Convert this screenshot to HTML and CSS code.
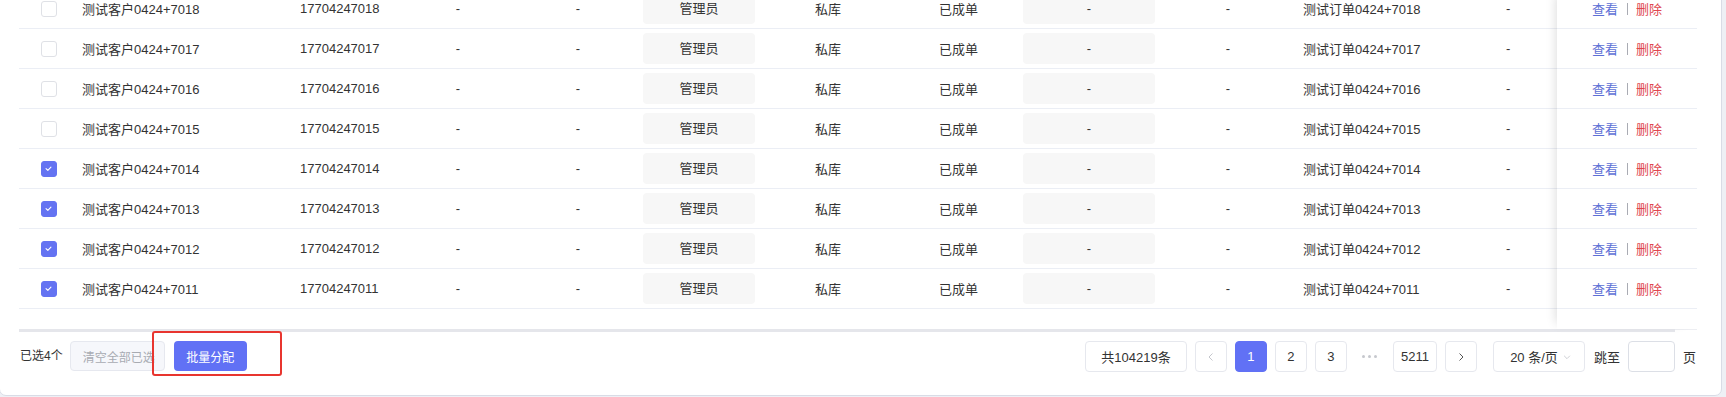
FILE: index.html
```html
<!DOCTYPE html>
<html lang="zh-CN">
<head>
<meta charset="utf-8">
<title>客户列表</title>
<link rel="stylesheet" href="styles.css">
</head>
<body>
<div class="card">
  <div class="table">
    <div class="tbody">
      <div class="main">
        <div class="row"><div class="c-chk"><span class="chk"></span></div><div class="c-name">测试客户0424+7018</div><div class="c-phone">17704247018</div><div class="c-mid">-</div><div class="c-mid">-</div><div class="c-box"><span class="pill">管理员</span></div><div class="c-pool">私库</div><div class="c-status">已成单</div><div class="c-box"><span class="pill">-</span></div><div class="c-mid">-</div><div class="c-order">测试订单0424+7018</div><div class="c-last">-</div></div>
        <div class="row"><div class="c-chk"><span class="chk"></span></div><div class="c-name">测试客户0424+7017</div><div class="c-phone">17704247017</div><div class="c-mid">-</div><div class="c-mid">-</div><div class="c-box"><span class="pill">管理员</span></div><div class="c-pool">私库</div><div class="c-status">已成单</div><div class="c-box"><span class="pill">-</span></div><div class="c-mid">-</div><div class="c-order">测试订单0424+7017</div><div class="c-last">-</div></div>
        <div class="row"><div class="c-chk"><span class="chk"></span></div><div class="c-name">测试客户0424+7016</div><div class="c-phone">17704247016</div><div class="c-mid">-</div><div class="c-mid">-</div><div class="c-box"><span class="pill">管理员</span></div><div class="c-pool">私库</div><div class="c-status">已成单</div><div class="c-box"><span class="pill">-</span></div><div class="c-mid">-</div><div class="c-order">测试订单0424+7016</div><div class="c-last">-</div></div>
        <div class="row"><div class="c-chk"><span class="chk"></span></div><div class="c-name">测试客户0424+7015</div><div class="c-phone">17704247015</div><div class="c-mid">-</div><div class="c-mid">-</div><div class="c-box"><span class="pill">管理员</span></div><div class="c-pool">私库</div><div class="c-status">已成单</div><div class="c-box"><span class="pill">-</span></div><div class="c-mid">-</div><div class="c-order">测试订单0424+7015</div><div class="c-last">-</div></div>
        <div class="row"><div class="c-chk"><span class="chk on"><svg viewBox="0 0 16 16"><polyline points="5,8.2 7.2,10.3 11,6.3"/></svg></span></div><div class="c-name">测试客户0424+7014</div><div class="c-phone">17704247014</div><div class="c-mid">-</div><div class="c-mid">-</div><div class="c-box"><span class="pill">管理员</span></div><div class="c-pool">私库</div><div class="c-status">已成单</div><div class="c-box"><span class="pill">-</span></div><div class="c-mid">-</div><div class="c-order">测试订单0424+7014</div><div class="c-last">-</div></div>
        <div class="row"><div class="c-chk"><span class="chk on"><svg viewBox="0 0 16 16"><polyline points="5,8.2 7.2,10.3 11,6.3"/></svg></span></div><div class="c-name">测试客户0424+7013</div><div class="c-phone">17704247013</div><div class="c-mid">-</div><div class="c-mid">-</div><div class="c-box"><span class="pill">管理员</span></div><div class="c-pool">私库</div><div class="c-status">已成单</div><div class="c-box"><span class="pill">-</span></div><div class="c-mid">-</div><div class="c-order">测试订单0424+7013</div><div class="c-last">-</div></div>
        <div class="row"><div class="c-chk"><span class="chk on"><svg viewBox="0 0 16 16"><polyline points="5,8.2 7.2,10.3 11,6.3"/></svg></span></div><div class="c-name">测试客户0424+7012</div><div class="c-phone">17704247012</div><div class="c-mid">-</div><div class="c-mid">-</div><div class="c-box"><span class="pill">管理员</span></div><div class="c-pool">私库</div><div class="c-status">已成单</div><div class="c-box"><span class="pill">-</span></div><div class="c-mid">-</div><div class="c-order">测试订单0424+7012</div><div class="c-last">-</div></div>
        <div class="row"><div class="c-chk"><span class="chk on"><svg viewBox="0 0 16 16"><polyline points="5,8.2 7.2,10.3 11,6.3"/></svg></span></div><div class="c-name">测试客户0424+7011</div><div class="c-phone">17704247011</div><div class="c-mid">-</div><div class="c-mid">-</div><div class="c-box"><span class="pill">管理员</span></div><div class="c-pool">私库</div><div class="c-status">已成单</div><div class="c-box"><span class="pill">-</span></div><div class="c-mid">-</div><div class="c-order">测试订单0424+7011</div><div class="c-last">-</div></div>
      </div>
      <div class="fixed">
        <div class="frow"><a class="act view">查看</a><i class="sep"></i><a class="act del">删除</a></div>
        <div class="frow"><a class="act view">查看</a><i class="sep"></i><a class="act del">删除</a></div>
        <div class="frow"><a class="act view">查看</a><i class="sep"></i><a class="act del">删除</a></div>
        <div class="frow"><a class="act view">查看</a><i class="sep"></i><a class="act del">删除</a></div>
        <div class="frow"><a class="act view">查看</a><i class="sep"></i><a class="act del">删除</a></div>
        <div class="frow"><a class="act view">查看</a><i class="sep"></i><a class="act del">删除</a></div>
        <div class="frow"><a class="act view">查看</a><i class="sep"></i><a class="act del">删除</a></div>
        <div class="frow"><a class="act view">查看</a><i class="sep"></i><a class="act del">删除</a></div>
      </div>
    </div>
    <div class="hscroll"><div class="thumb"></div></div>
  </div>
  <div class="footer">
    <span class="selected">已选4个</span>
    <button class="btn btn-clear">清空全部已选</button>
    <button class="btn btn-primary">批量分配</button>
    <div class="annot"></div>
    <div class="pager">
      <span class="total">共104219条</span>
      <span class="pg disabled"><svg viewBox="0 0 12 12"><polyline points="7.5,2.5 4,6 7.5,9.5"/></svg></span>
      <span class="pg active">1</span>
      <span class="pg">2</span>
      <span class="pg">3</span>
      <span class="more"><i></i><i></i><i></i></span>
      <span class="pg wide">5211</span>
      <span class="pg"><svg viewBox="0 0 12 12"><polyline points="4.5,2.5 8,6 4.5,9.5"/></svg></span>
      <span class="size">20 条/页<svg viewBox="0 0 12 12"><polyline points="2.5,4.5 6,8 9.5,4.5"/></svg></span>
      <span class="jump">跳至</span>
      <span class="jump-input"></span>
      <span class="jump-unit">页</span>
    </div>
  </div>
</div>
</body>
</html>
```

FILE: styles.css
```css
html, body {
  margin: 0;
  padding: 0;
}
body {
  background: #eef0f5;
  font-family: "Liberation Sans", "Noto Sans CJK SC", sans-serif;
  font-size: 13px;
  color: #333333;
  overflow: hidden;
}
.card {
  margin: -12px 0 0 -1px;
  width: 1723px;
  box-sizing: border-box;
  border: 1px solid #d9dce6;
  border-radius: 0 0 7px 7px;
  background: #ffffff;
  padding: 0 24px 0 19px;
}
.tbody {
  display: flex;
}
.main {
  width: 1538px;
  padding-bottom: 20px;
}
.fixed {
  width: 140px;
  padding-bottom: 20px;
  background: #ffffff;
  position: relative;
  z-index: 1;
  box-shadow: -7px 0 10px -6px rgba(0, 0, 0, 0.14);
}
.row {
  display: grid;
  grid-template-columns: 60px 221px 98px 120px 120px 122px 140px 118px 142px 136px 144px 117px;
  height: 40px;
  box-sizing: border-box;
  border-bottom: 1px solid #ebeef5;
  align-items: center;
  white-space: nowrap;
}
.c-chk {
  display: flex;
  justify-content: center;
}
.chk {
  width: 16px;
  height: 16px;
  box-sizing: border-box;
  border: 1.5px solid #dfe1e6;
  border-radius: 3px;
  background: #fff;
  display: block;
}
.chk.on {
  background: #6473f2;
  border-color: #6473f2;
}
.chk svg {
  display: block;
  width: 13px;
  height: 13px;
  fill: none;
  stroke: #fff;
  stroke-width: 1.4;
  stroke-linecap: round;
  stroke-linejoin: round;
}
.c-name { padding-left: 3px; }
.c-mid { text-align: center; }
.c-box {
  display: flex;
  padding: 0 5px;
}
.pill {
  flex: 1;
  height: 31px;
  line-height: 31px;
  text-align: center;
  background: #f7f7f7;
  border-radius: 4px;
}
.c-pool { padding-left: 55px; }
.c-status { padding-left: 39px; }
.c-order { padding-left: 7px; }
.c-last { padding-left: 66px; }
.frow {
  height: 40px;
  box-sizing: border-box;
  border-bottom: 1px solid #ebeef5;
  display: flex;
  align-items: center;
  justify-content: center;
}
.act {
  cursor: pointer;
}
.view { color: #5d6fd6; }
.del { color: #e0474f; }
.sep {
  width: 1px;
  height: 12px;
  background: #a9abb3;
  margin: 0 8px 0 9px;
}
.hscroll {
  height: 3px;
  background: linear-gradient(#edeef2, #edeef2) top / 100% 1px no-repeat;
}
.thumb {
  width: 1656px;
  height: 3px;
  background: #e5e6eb;
}
.footer {
  position: relative;
  display: flex;
  align-items: flex-start;
  height: 63px;
  box-sizing: border-box;
  padding-top: 9px;
}
.selected {
  font-size: 12px;
  line-height: 30px;
  margin-left: 1px;
}
.btn {
  height: 30px;
  border-radius: 4px;
  font-family: inherit;
  font-size: 12px;
  padding: 0;
  box-sizing: border-box;
}
.btn-clear {
  margin-left: 7px;
  width: 95px;
  border: 1px solid #e6e8ef;
  background: #f6f7fb;
  color: #a8abb2;
  text-align: left;
  padding-left: 12px;
  overflow: hidden;
  white-space: nowrap;
}
.btn-primary {
  margin-left: 9px;
  width: 73px;
  border: none;
  background: #6171f5;
  color: #ffffff;
}
.annot {
  position: absolute;
  left: 133px;
  top: -1px;
  width: 130px;
  height: 45px;
  box-sizing: border-box;
  border: 2px solid #e8352f;
  border-radius: 3px;
  pointer-events: none;
}
.pager {
  margin-left: auto;
  display: flex;
  align-items: center;
  gap: 8px;
  height: 31px;
}
.total, .pg, .size, .jump-input {
  height: 31px;
  box-sizing: border-box;
  border: 1px solid #e6e8ee;
  border-radius: 4px;
  background: #fff;
  display: flex;
  align-items: center;
  justify-content: center;
}
.total {
  width: 102px;
}
.pg {
  width: 32px;
  color: #333;
}
.pg.wide {
  width: 44px;
}
.pg svg, .size svg {
  width: 12px;
  height: 12px;
  fill: none;
  stroke: #555;
  stroke-width: 1;
}
.pg.disabled svg {
  stroke: #c4c6cc;
}
.pg.active {
  background: #6171f5;
  border-color: #6171f5;
  color: #fff;
}
.more {
  width: 30px;
  display: flex;
  justify-content: center;
  gap: 3px;
}
.more i {
  width: 3px;
  height: 3px;
  border-radius: 50%;
  background: #c6c8ce;
}
.size {
  width: 92px;
  margin-left: 8px;
  gap: 4px;
  padding-left: 4px;
}
.size svg {
  stroke: #c4c6cc;
  width: 10px;
  height: 10px;
}
.jump {
  margin-left: 1px;
}
.jump-input {
  width: 47px;
  border-color: #dcdfe6;
}
.jump-unit {
  margin-right: 1px;
}
```
